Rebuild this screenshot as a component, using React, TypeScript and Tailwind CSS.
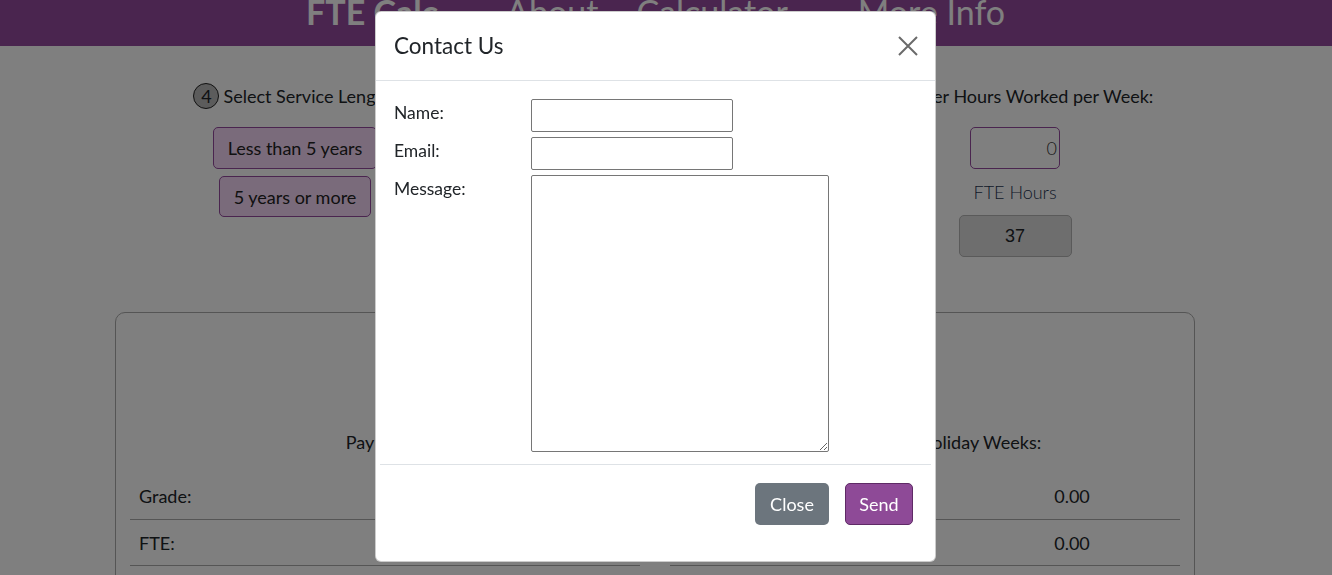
import React from 'react';

const StepBadge = ({ n }: { n: number }) => (
  <span className="inline-flex w-[26px] h-[26px] items-center justify-center rounded-full border border-[#222] bg-[#b8b8b8] text-[18px] leading-none text-[#212529]">
    {n}
  </span>
);

export default function App() {
  return (
    <div className="relative min-h-screen bg-white font-['Lato','Open_Sans',sans-serif] text-[18px] leading-[24px] text-[#212529] overflow-hidden">
      {/* Top nav bar */}
      <header className="h-[46px] bg-[#944a9e] overflow-hidden">
        <nav className="flex items-start ml-[306px] mt-[-5px] text-white text-[34px] leading-none">
          <span className="font-bold">FTE Calc</span>
          <span className="ml-[38px] flex items-start gap-[8px]">
            <span className="mt-[4px] inline-block w-[22px] h-[26px] border-b-[6px] border-white" />
            About
          </span>
          <span className="ml-[38px]">Calculator</span>
          <span className="ml-[40px] flex items-start gap-[8px]">
            <span className="mt-[4px] inline-block w-[22px] h-[26px] border-b-[6px] border-white" />
            More Info
          </span>
        </nav>
      </header>

      <main className="w-[1080px] ml-[115px]">
        {/* Step selectors */}
        <div className="grid grid-cols-3 pt-[37px]">
          <div className="flex flex-col items-center">
            <div className="flex items-center gap-[4px] h-[26px]">
              <StepBadge n={4} />
              <span className="-mt-[1px]">Select Service Length:</span>
            </div>
            <button className="mt-[18px] h-[42px] px-[14px] rounded-[5px] border border-[#944a9e] bg-[#f4d6f6] text-[#222]">
              Less than 5 years
            </button>
            <button className="mt-[7px] h-[41px] px-[14px] rounded-[5px] border border-[#944a9e] bg-[#f4d6f6] text-[#222]">
              5 years or more
            </button>
          </div>

          <div className="flex flex-col items-center">
            <div className="flex items-center gap-[4px] h-[26px]">
              <StepBadge n={3} />
              <span className="-mt-[1px]">Select Grade:</span>
            </div>
          </div>

          <div className="flex flex-col items-center">
            <div className="flex items-center gap-[4px] h-[26px]">
              <StepBadge n={5} />
              <span className="-mt-[1px]">Enter Hours Worked per Week:</span>
            </div>
            <input
              readOnly
              value="0"
              className="mt-[18px] w-[90px] h-[42px] px-[2px] rounded-[5px] border border-[#944a9e] text-right text-[18px] font-light text-[#333] outline-none"
            />
            <span className="mt-[11px] font-light text-[#1e3450]">FTE Hours</span>
            <div className="mt-[11px] w-[113px] h-[42px] flex items-center justify-center rounded-[5px] border border-[#b4b4b4] bg-[#dcdcdc] font-['Liberation_Sans',sans-serif] text-[18px]">
              37
            </div>
          </div>
        </div>

        {/* Results card */}
        <section className="mt-[55px] h-[400px] rounded-[10px] border border-[#aaa] px-[14px] pt-[117px]">
          <div className="grid grid-cols-2 gap-[30px]">
            <div>
              <div className="h-[24px] text-center">Pay Point:</div>
              <div className="mt-[19px]">
                <div className="h-[47px] flex items-center justify-between px-[9px] border-b border-[#aaa]">
                  <span>Grade:</span>
                  <span className="w-[198px] text-center">-</span>
                </div>
                <div className="h-[46px] flex items-center justify-between px-[9px] border-b border-[#aaa]">
                  <span>FTE:</span>
                  <span className="w-[198px] text-center">0.00</span>
                </div>
              </div>
            </div>
            <div>
              <div className="h-[24px] text-center">Annual Leave Holiday Weeks:</div>
              <div className="mt-[19px]">
                <div className="h-[47px] flex items-center justify-between px-[9px] border-b border-[#aaa]">
                  <span>Basic Leave:</span>
                  <span className="w-[198px] text-center">0.00</span>
                </div>
                <div className="h-[46px] flex items-center justify-between px-[9px] border-b border-[#aaa]">
                  <span>Bank Holidays:</span>
                  <span className="w-[198px] text-center">0.00</span>
                </div>
              </div>
            </div>
          </div>
        </section>
      </main>

      {/* Backdrop */}
      <div className="fixed inset-0 bg-black/50" />

      {/* Contact modal */}
      <div className="fixed left-[375px] top-[11px] w-[561px] h-[551px] flex flex-col rounded-[6px] border border-black/20 bg-white">
        <div className="h-[69px] flex items-center justify-between pl-[18px] pr-[17px] border-b border-[#dee2e6]">
          <h5 className="text-[22.5px] text-[#212529]">Contact Us</h5>
          <button aria-label="Close" className="w-[20px] h-[20px] text-[#6a6a6a]">
            <svg viewBox="0 0 20 20" width="20" height="20" fill="none" stroke="currentColor" strokeWidth="2">
              <path d="M1 1 L19 19 M19 1 L1 19" />
            </svg>
          </button>
        </div>

        <div className="pt-[18px] pl-[18px] text-[17.5px]">
          <div className="flex items-start">
            <label className="w-[137px] pt-[2px]">Name:</label>
            <input className="w-[202px] h-[33px] rounded-[2px] border border-[#767676] outline-none" />
          </div>
          <div className="flex items-start mt-[5px]">
            <label className="w-[137px] pt-[2px]">Email:</label>
            <input className="w-[202px] h-[33px] rounded-[2px] border border-[#767676] outline-none" />
          </div>
          <div className="flex items-start mt-[5px]">
            <label className="w-[137px] pt-[2px]">Message:</label>
            <textarea className="block w-[298px] h-[277px] rounded-[2px] border border-[#767676] outline-none" />
          </div>
        </div>

        <div className="mt-[12px] mx-[4px] border-t border-[#dee2e6]" />

        <div className="flex justify-end gap-[16px] pt-[18px] pr-[22px]">
          <button className="h-[42px] w-[74px] rounded-[5px] bg-[#6c757d] text-white text-[18px]">Close</button>
          <button className="h-[42px] w-[68px] rounded-[5px] border border-[#5f2a66] bg-[#8e4a97] text-white text-[18px]">Send</button>
        </div>
      </div>
    </div>
  );
}
